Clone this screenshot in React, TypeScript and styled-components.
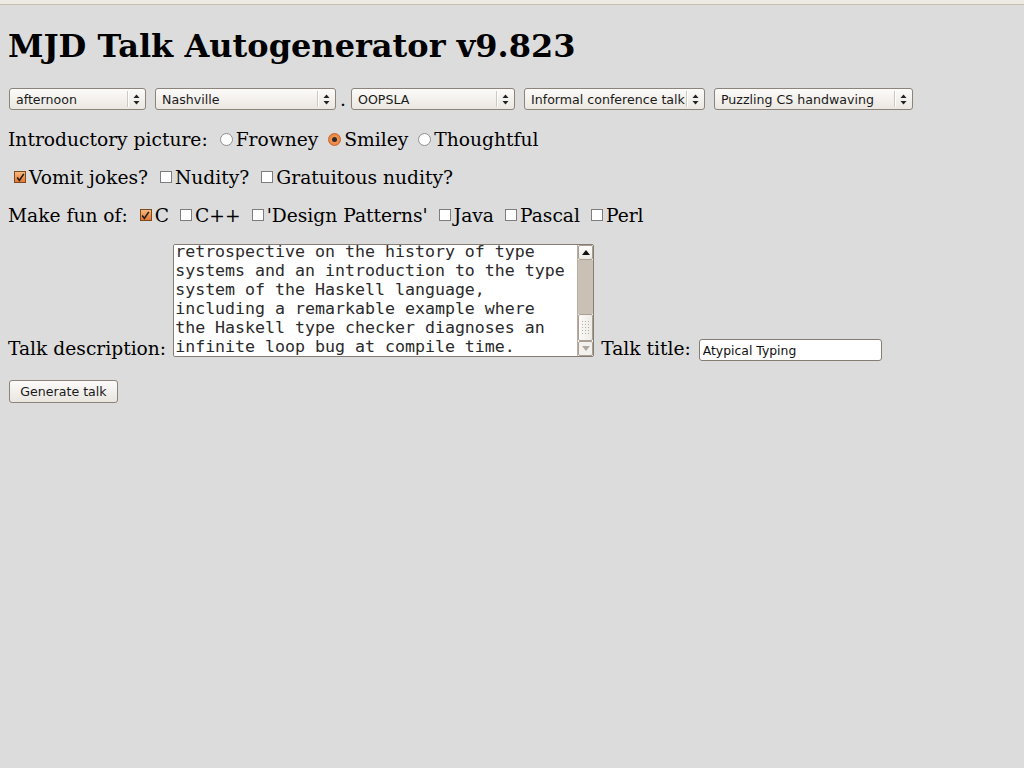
import React, { useEffect, useRef } from 'react';
import styled, { createGlobalStyle } from 'styled-components';

const GlobalStyle = createGlobalStyle`
  html, body {
    margin: 0;
    padding: 0;
    background: #dcdcdc;
  }
  body {
    font-family: 'DejaVu Serif', 'Liberation Serif', serif;
    font-size: 18.67px;
    color: #000;
  }
`;

const TopStrip = styled.div`
  height: 4px;
  background: #ede9e3;
  border-bottom: 1px solid #c9bdb0;
`;

const Page = styled.div`
  display: flex;
  flex-direction: column;
  align-items: flex-start;
  padding: 0 8px;
  min-height: 763px;
`;

const Title = styled.h1`
  margin: 23px 0 0;
  font-size: 32px;
  font-weight: bold;
  line-height: 37px;
`;

const Row = styled.div<{ $top: number }>`
  display: flex;
  align-items: center;
  height: 22px;
  margin-top: ${(p) => p.$top}px;
  white-space: nowrap;
`;

const SelectBox = styled.div<{ $width: number }>`
  display: flex;
  align-items: center;
  box-sizing: border-box;
  width: ${(p) => p.$width}px;
  height: 22px;
  padding-left: 6px;
  border: 1px solid #8c837a;
  border-radius: 3px;
  background: linear-gradient(#fcfbfa, #ebe7e1);
  font-family: 'DejaVu Sans', sans-serif;
  font-size: 12.6px;
  color: #1a1a1a;
  margin-right: 9px;
`;

const SelectValue = styled.span`
  flex: 1;
  overflow: hidden;
`;

const SelectDivider = styled.span`
  width: 1px;
  height: 16px;
  background: #cfc8bf;
  box-shadow: 1px 0 0 #fff;
`;

const SelectArrows = styled.span`
  display: flex;
  justify-content: center;
  width: 17px;
`;

const FirstPad = styled.span`
  width: 1px;
`;

const Dot = styled.span`
  margin: 0 6px 0 -5px;
  width: 5px;
`;

const Label = styled.span`
  margin-right: 12px;
`;

const Option = styled.span<{ $gap?: number }>`
  display: flex;
  align-items: center;
  margin-right: ${(p) => p.$gap ?? 12}px;
`;

const OptionText = styled.span`
  margin-left: 3px;
`;

const Box = styled.span<{ $checked?: boolean }>`
  display: inline-flex;
  align-items: center;
  justify-content: center;
  box-sizing: border-box;
  width: 12px;
  height: 12px;
  border: 1px solid ${(p) => (p.$checked ? '#7a4a22' : '#7d7d7d')};
  background: ${(p) =>
    p.$checked ? 'linear-gradient(#f7b87e, #e9772f)' : '#fff'};
`;

const Round = styled.span<{ $checked?: boolean }>`
  display: inline-flex;
  align-items: center;
  justify-content: center;
  box-sizing: border-box;
  width: 13px;
  height: 13px;
  border-radius: 50%;
  border: 1px solid ${(p) => (p.$checked ? '#c8632a' : '#8f8f8f')};
  background: ${(p) =>
    p.$checked ? 'radial-gradient(circle, #f5a469 0%, #e9762f 100%)' : '#fff'};
`;

const RadioDot = styled.span`
  width: 5px;
  height: 5px;
  border-radius: 50%;
  background: #2b2b2b;
`;

const Lead = styled.span`
  width: 6px;
`;

const DescRow = styled.div`
  display: flex;
  align-items: flex-end;
  margin-top: 18px;
  white-space: nowrap;
`;

const DescLabel = styled.span`
  margin: 0 7px -3px 0;
  line-height: 22px;
`;

const AreaFrame = styled.div`
  display: flex;
  box-sizing: border-box;
  width: 421px;
  height: 113px;
  border: 1px solid #857d73;
  border-radius: 2px;
  background: #fff;
  overflow: hidden;
`;

const TextArea = styled.textarea`
  flex: 1;
  margin: 0;
  border: none;
  outline: none;
  resize: none;
  overflow: hidden;
  padding: 0 1px;
  background: #fff;
  color: #2a2a2a;
  font-family: 'DejaVu Sans Mono', 'Liberation Mono', monospace;
  font-size: 16.6px;
  line-height: 19px;
`;

const ScrollBar = styled.div`
  display: flex;
  flex-direction: column;
  width: 15px;
  border-left: 1px solid #b8aea3;
`;

const ScrollButton = styled.div<{ $disabled?: boolean }>`
  display: flex;
  align-items: center;
  justify-content: center;
  box-sizing: border-box;
  height: 15px;
  border: 1px solid #a89e93;
  border-radius: 2px;
  background: ${(p) => (p.$disabled ? '#f3f1ee' : 'linear-gradient(#fdfcfb, #ece8e3)')};
`;

const Track = styled.div`
  flex: 1;
  background: #c9c1b6;
`;

const Thumb = styled.div`
  display: flex;
  align-items: center;
  justify-content: center;
  box-sizing: border-box;
  height: 27px;
  border: 1px solid #a89e93;
  border-radius: 2px;
  background: linear-gradient(90deg, #fbfaf8, #efebe6);
`;

const TitleLabel = styled.span`
  margin: 0 8px -3px 7px;
  line-height: 22px;
`;

const TitleInput = styled.input`
  box-sizing: border-box;
  width: 183px;
  height: 22px;
  margin: 0 0 -4px;
  padding: 0 3px;
  border: 1px solid #857d73;
  border-radius: 3px;
  background: #fff;
  font-family: 'DejaVu Sans', sans-serif;
  font-size: 12.4px;
  color: #111;
  outline: none;
`;

const Button = styled.button`
  box-sizing: border-box;
  margin: 23px 0 0 1px;
  width: 109px;
  height: 23px;
  padding: 0;
  border: 1px solid #8c837a;
  border-radius: 3px;
  background: linear-gradient(#fcfbfa, #e9e5df);
  font-family: 'DejaVu Sans', sans-serif;
  font-size: 12.6px;
  color: #1a1a1a;
`;

const UpDown = () => (
  <svg width="7" height="11" viewBox="0 0 7 11">
    <path d="M3.5 0.5 L6.5 4 L0.5 4 Z" fill="#222" />
    <path d="M0.5 7 L6.5 7 L3.5 10.5 Z" fill="#222" />
  </svg>
);

const Select: React.FC<{ value: string; width: number }> = ({ value, width }) => (
  <SelectBox $width={width}>
    <SelectValue>{value}</SelectValue>
    <SelectDivider />
    <SelectArrows>
      <UpDown />
    </SelectArrows>
  </SelectBox>
);

const Checkbox: React.FC<{ checked?: boolean }> = ({ checked }) => (
  <Box $checked={checked}>
    {checked && (
      <svg width="9" height="9" viewBox="0 0 9 9">
        <path d="M1.2 4.6 L3.4 7.4 L7.8 0.9" fill="none" stroke="#1c1c1c" strokeWidth="1.6" />
      </svg>
    )}
  </Box>
);

const Radio: React.FC<{ checked?: boolean }> = ({ checked }) => (
  <Round $checked={checked}>{checked && <RadioDot />}</Round>
);

const Check: React.FC<{ label: string; checked?: boolean; gap?: number }> = ({
  label,
  checked,
  gap,
}) => (
  <Option $gap={gap}>
    <Checkbox checked={checked} />
    <OptionText>{label}</OptionText>
  </Option>
);

const description = [
  'This talk opens with a brief and highly',
  'opinionated survey of type systems, then',
  'Mark Jason Dominus presents a',
  'retrospective on the history of type',
  'systems and an introduction to the type',
  'system of the Haskell language,',
  'including a remarkable example where',
  'the Haskell type checker diagnoses an',
  'infinite loop bug at compile time.',
].join('\n');

const App: React.FC = () => {
  const areaRef = useRef<HTMLTextAreaElement>(null);

  useEffect(() => {
    const el = areaRef.current;
    if (el) el.scrollTop = el.scrollHeight;
  }, []);

  return (
    <>
      <GlobalStyle />
      <TopStrip />
      <Page>
        <Title>MJD Talk Autogenerator v9.823</Title>

        <Row $top={23}>
          <FirstPad />
          <Select value="afternoon" width={137} />
          <Select value="Nashville" width={181} />
          <Dot>.</Dot>
          <Select value="OOPSLA" width={164} />
          <Select value="Informal conference talk" width={181} />
          <Select value="Puzzling CS handwaving" width={199} />
        </Row>

        <Row $top={18}>
          <Label>Introductory picture:</Label>
          <Option $gap={10}>
            <Radio />
            <OptionText>Frowney</OptionText>
          </Option>
          <Option $gap={10}>
            <Radio checked />
            <OptionText>Smiley</OptionText>
          </Option>
          <Option $gap={10}>
            <Radio />
            <OptionText>Thoughtful</OptionText>
          </Option>
        </Row>

        <Row $top={16}>
          <Lead />
          <Check label="Vomit jokes?" checked />
          <Check label="Nudity?" />
          <Check label="Gratuitous nudity?" />
        </Row>

        <Row $top={16}>
          <Label>Make fun of:</Label>
          <Check label="C" checked gap={11} />
          <Check label="C++" gap={11} />
          <Check label="'Design Patterns'" gap={11} />
          <Check label="Java" gap={11} />
          <Check label="Pascal" gap={11} />
          <Check label="Perl" gap={11} />
        </Row>

        <DescRow>
          <DescLabel>Talk description:</DescLabel>
          <AreaFrame>
            <TextArea ref={areaRef} wrap="off" defaultValue={description} />
            <ScrollBar>
              <ScrollButton>
                <svg width="8" height="5" viewBox="0 0 8 5">
                  <path d="M0 5 L4 0 L8 5 Z" fill="#111" />
                </svg>
              </ScrollButton>
              <Track />
              <Thumb>
                <svg width="9" height="15" viewBox="0 0 9 15">
                  {[0, 3, 6, 9, 12].map((y) =>
                    [0, 3, 6].map((x) => (
                      <rect key={`${x}-${y}`} x={x + 1} y={y + 1} width="1" height="1" fill="#b5aca2" />
                    ))
                  )}
                </svg>
              </Thumb>
              <ScrollButton $disabled>
                <svg width="8" height="5" viewBox="0 0 8 5">
                  <path d="M0 0 L8 0 L4 5 Z" fill="#b0a89f" />
                </svg>
              </ScrollButton>
            </ScrollBar>
          </AreaFrame>
          <TitleLabel>Talk title:</TitleLabel>
          <TitleInput defaultValue="Atypical Typing" />
        </DescRow>

        <Button>Generate talk</Button>
      </Page>
    </>
  );
};

export default App;
